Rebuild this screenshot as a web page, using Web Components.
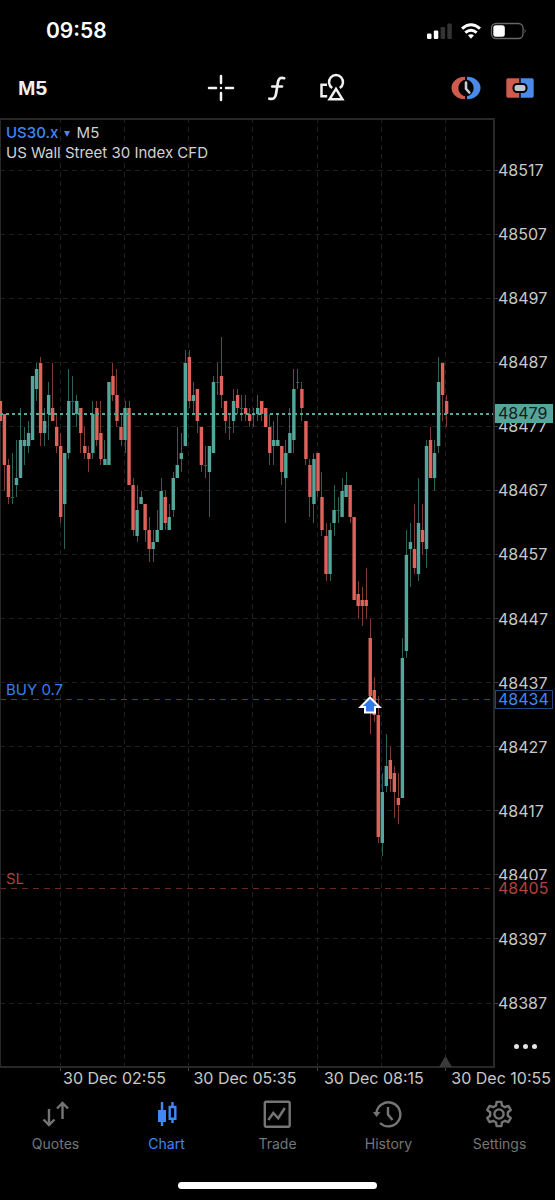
<!DOCTYPE html>
<html lang="en">
<head>
<meta charset="utf-8">
<meta name="viewport" content="width=device-width, initial-scale=1">
<title>US30.x M5 chart</title>
<style>
body { margin: 0; background: #000; color: #d2d2d2; font-family: Inter, "Liberation Sans", sans-serif; }
</style>
</head>
<body>
<trade-app></trade-app>
<script>
const define = (name, html, setup) => {
  const template = document.createElement('template');
  template.innerHTML = html;
  customElements.define(name, class extends HTMLElement {
    connectedCallback() {
      if (this.shadowRoot) return;
      this.attachShadow({ mode: 'open' }).append(template.content.cloneNode(true));
      if (setup) setup(this, this.shadowRoot);
    }
  });
};

define('status-bar', `
<style>
  :host { display: flex; justify-content: space-between; align-items: center; height: 62px; padding: 0 28px 0 46px; color: #fff; }
  time { font-size: 21px; line-height: 24px; font-weight: 600; }
  svg { display: block; }
</style>
<time>09:58</time>
<svg width="100" height="20" viewBox="427 20 100 20" role="img" aria-label="Signal, Wi-Fi, battery">
  <g fill="#fff"><rect x="427" y="32.500" width="4.500" height="5.500" rx="1.200"/><rect x="433.800" y="29.500" width="4.500" height="8.500" rx="1.200"/></g>
  <g fill="#333"><rect x="440.600" y="26" width="4.500" height="12" rx="1.200"/><rect x="447.300" y="22.500" width="4.500" height="15.500" rx="1.200"/></g>
  <g fill="none" stroke="#fff" stroke-width="3"><path d="M462 27.600Q471 19.800 480 27.600"/><path d="M465.300 31.700Q471 26.800 476.700 31.700"/></g>
  <path d="M468 34.300Q471 32 474 34.300L471 37.700Z" fill="#fff"/>
  <rect x="491.500" y="22.500" width="31.500" height="15" rx="4.500" fill="none" stroke="#666" stroke-width="1.300"/>
  <rect x="493.300" y="24.300" width="11.500" height="11.500" rx="2.500" fill="#fff"/>
  <path d="M524.600 27.600q2 2.400 0 4.800z" fill="#666"/>
</svg>`);

define('chart-toolbar', `
<style>
  :host { display: grid; grid-template-columns: 1fr auto 1fr; align-items: center; height: 56px; box-sizing: border-box; padding: 0 20px 4px 18px; }
  div { display: flex; gap: 24px; }
  .end { justify-content: flex-end; }
  button { appearance: none; border: 0; padding: 0; background: none; color: #f0f0f0; cursor: pointer; }
  .period { font: bold 21px/28px "Liberation Sans", sans-serif; }
  svg { display: block; }
</style>
<div><button class="period">M5</button></div>
<div>
  <button aria-label="Crosshair"><svg width="32" height="32" viewBox="-16 -16 32 32" stroke="#f4f4f4" stroke-width="2.500" stroke-linecap="round"><path d="M-12 0H-5M5 0H12M0-12V-5M0 5V12M0 0h.01"/></svg></button>
  <button aria-label="Indicators"><svg width="32" height="32" viewBox="-16 -16 32 32" fill="none" stroke="#f0f0f0" stroke-width="2.700" stroke-linecap="round"><path d="M7.200-9.800C3-11.200 1.500-9 .8-5L-1 6C-1.700 10.500-4 11.500-7.700 10.700M-4.800-1.500H5"/></svg></button>
  <button aria-label="Objects"><svg width="32" height="32" viewBox="-15 -16 32 32" fill="none" stroke="#f0f0f0" stroke-width="2.500"><path d="M.2 0A7 7 0 1 1 7.800 0"/><path d="M4 .8L10.400 11.200H-2.400Z"/><path d="M-5-3.200H-10.500V8.200H-4.800"/></svg></button>
</div>
<div class="end">
  <button aria-label="Trading sessions"><svg width="30" height="28" viewBox="-15 -14 30 28">
    <path d="M-1-11.200A13.500 11.200 0 0 0-1 11.200V8.300A8.500 8.500 0 0 1-1-8.300Z" fill="#cf5b4e"/>
    <path d="M1-11.200A13.500 11.200 0 0 1 1 11.200V8.300A8.500 8.500 0 0 0 1-8.300Z" fill="#4b8ae8"/>
    <path d="M0-5.500V.8L3.300 4.500" fill="none" stroke="#c9cdd4" stroke-width="2.600" stroke-linecap="round"/></svg></button>
  <button aria-label="One-click trading"><svg width="30" height="28" viewBox="-15 -14 30 28">
    <path d="M-.7-9.700V9.700H-12A1.700 1.700 0 0 1-13.700 8V-8A1.700 1.700 0 0 1-12-9.700Z" fill="#cf5b4e"/>
    <path d="M.7-9.700V9.700H12A1.700 1.700 0 0 0 13.700 8V-8A1.700 1.700 0 0 0 12-9.700Z" fill="#4b8ae8"/>
    <rect x="-6.500" y="-4" width="13" height="8" rx="3.500" fill="#c0c6d0" stroke="#000" stroke-width="2"/></svg></button>
</div>`);

/* Candles: direction (G up, R down), high, body top, body bottom, low; prices are offsets from 48000. */
const CANDLES = `R481,481,478,478 R479,479,471,467 R472,471,466,465 G473,466,466,465 G475,469,468,466 G480,475,469,469 G477,475,474,471 G478,476,474,473
G485,485,475,475 G487,486,483,481 R488,487,476,474 G480,478,476,474 G484,482,479,475 R487,480,478,478 R479,477,474,473 R476,474,463,462
G473,473,465,458 G486,481,473,472 G485,481,481,479 G482,481,479,477 R480,480,476,473 R477,474,473,472 R474,473,472,470 G481,479,473,472
R481,480,475,474 R481,476,472,471 G475,472,471,471 G484,484,471,471 R487,485,482,481 R486,482,478,477 R479,477,475,474 G481,480,475,473
R481,480,468,468 R469,468,461,460 G468,464,460,459 G467,466,465,465 R465,465,461,459 R463,461,458,456 G461,459,458,456 G464,461,459,459
G469,467,461,461 R467,466,462,461 G465,463,461,461 G470,469,464,463 G477,471,469,469 G476,473,472,470 G489,487,474,474 R489,488,481,480
G484,482,481,479 R483,483,478,476 R477,477,471,470 G474,471,471,469 G474,474,470,463 G485,484,473,473 G487,484,484,482 R491,485,482,480
R481,481,478,476 G479,477,477,475 G483,481,478,476 R483,482,480,479 G482,480,480,478 R482,480,479,478 R480,479,478,477 G480,479,479,477
G482,480,479,478 R481,481,479,478 R480,480,477,477 R479,477,473,471 G478,475,474,471 G479,475,474,474 R474,474,470,468 G475,473,469,462
G480,476,473,473 G486,483,475,473 G486,484,484,483 R484,483,480,478 R478,478,472,471 R472,471,466,463 G473,472,465,462 R473,473,467,466
R470,466,461,460 R462,460,454,453 G462,461,454,453 G468,464,462,460 G466,464,464,462 G469,467,463,463 G470,468,466,466 R468,468,463,462
R463,463,450,450 R453,451,449,447 R452,450,449,446 R455,450,449,447 R447,444,435,429 R438,436,432,431 R435,432,413,412 G423,420,412,410
G429,424,421,420 R427,425,422,420 R424,423,420,416 R423,419,418,415 G444,441,419,419 G461,457,442,441 G462,459,458,452 R465,458,455,454
G469,462,454,453 R465,461,459,457 G475,474,458,455 R477,475,469,469 G475,473,469,467 G488,484,474,473 R487,487,482,478 R482,481,479,477`.split(/\s+/);

define('candle-plot', `
<style>
  :host { display: block; position: relative; min-width: 0; }
  svg { display: block; width: 100%; height: 100%; overflow: visible; }
  text { font-size: 15px; }
  header { position: absolute; left: 6px; top: 5px; font-size: 15px; line-height: 20px; }
  button { appearance: none; border: 0; padding: 0; background: none; color: #3f86f7; font: 500 15px/20px Inter, sans-serif; cursor: pointer; }
  i { display: inline-block; margin: 0 2px 1px; border: solid transparent; border-width: 6px 3px 0; border-top-color: #3f86f7; }
  h1 { margin: 0; font: inherit; }
</style>
<svg viewBox="0 0 495 950" preserveAspectRatio="none">
  <g id="grid" stroke="#1f1f23" stroke-width="1" stroke-dasharray="5 4"></g>
  <g id="ticks" stroke="#444"></g>
  <path d="M0 581.500H491" stroke="#23488a" stroke-dasharray="6 5"/>
  <path d="M0 770.500H491" stroke="#6b2926" stroke-dasharray="6 5"/>
  <path d="M0 1H494V949H0Z" fill="none" stroke="#282828" stroke-width="2"/>
  <path d="M439 949L445.500 938L452 949Z" fill="#3a3a3a"/>
  <g id="candles"></g>
  <path d="M0 296H493" stroke="#58a89b" stroke-width="2" stroke-dasharray="3 3"/>
  <path d="M370 579.500L379.500 589H375V594.500H365V589H360.500Z" fill="#3579ee" stroke="#fff" stroke-width="2"/>
  <text x="6" y="577" fill="#3b7de8">BUY 0.7</text>
  <text x="6" y="766" fill="#a8423b">SL</text>
</svg>
<header><button>US30.x <i></i></button> M5<h1>US Wall Street 30 Index CFD</h1></header>`, (host, root) => {
  let grid = '', ticks = '', bars = '';
  for (let k = 0; k < 14; k++) {
    const y = Math.round(52 + k * 64.04) + .5;
    grid += `<path d="M0 ${y}H493"/>`;
    ticks += `<path d="M495 ${y}h3"/>`;
  }
  for (let k = 0; k < 7; k++) {
    const x = Math.floor(60 + k * 64.3) + .5;
    grid += `<path d="M${x} 0V948"/>`;
    if (k % 2 === 0) ticks += `<path d="M${x} 950v3"/>`;
  }
  const yOf = p => Math.round(245 + (487 - p) * 6.404);
  CANDLES.forEach((c, i) => {
    const [hi, top, bottom, lo] = c.slice(1).split(',').map(v => yOf(+v));
    const center = i * 4.02 + .4, x = Math.floor(center), up = c[0] === 'G';
    const left = (center - 1.7).toFixed(2);
    bars += `<rect x="${x}" y="${hi}" width="1" height="${Math.max(1, lo - hi)}" fill="${up ? '#2c6059' : '#803a35'}"/>`
      + (top === bottom
        ? `<rect x="${left}" y="${top}" width="3.4" height="1" fill="#2c6059"/>`
        : `<rect x="${left}" y="${top}" width="3.4" height="${bottom - top}" fill="${up ? '#55a69a' : '#e0635b'}"/>`);
  });
  root.getElementById('grid').innerHTML = grid;
  root.getElementById('ticks').innerHTML = ticks;
  root.getElementById('candles').innerHTML = bars;
});

define('price-axis', `
<style>
  :host { display: flex; flex-direction: column; position: relative; padding: 20px 0 11px; font-size: 16px; line-height: 18px; color: #c8c8c8; }
  ol { margin: 0; padding: 0 0 0 3px; list-style: none; display: grid; grid-template-rows: repeat(14, 1fr); align-items: center; height: 897px; }
  button { appearance: none; border: 0; padding: 0; background: none; height: 22px; display: flex; justify-content: center; align-items: center; gap: 4px; cursor: pointer; }
  button i { width: 5px; height: 5px; border-radius: 50%; background: #e4e4e4; }
  b { position: absolute; left: 0; right: 2px; padding-left: 3px; font-weight: 400; box-sizing: border-box; }
  .now { top: 286px; background: #55a69a; color: #10201e; line-height: 19px; }
  .buy { top: 572px; border: 1px solid #1f4583; padding-left: 2px; background: #000; color: #3f86f7; line-height: 17px; }
  .stop { top: 762px; background: #000; color: #b0443d; line-height: 17px; }
</style>
<ol></ol>
<button aria-label="More"><i></i><i></i><i></i></button>
<b class="now">48479</b><b class="buy">48434</b><b class="stop">48405</b>`, (host, root) => {
  let rows = '';
  for (let p = 48517; p >= 48387; p -= 10) rows += `<li>${p}</li>`;
  root.querySelector('ol').innerHTML = rows;
});

define('time-axis', `
<style>
  :host { display: flex; justify-content: space-between; padding: 0 4px 0 63px; font-size: 16px; line-height: 20px; color: #c8c8c8; white-space: nowrap; }
</style>
<time>30 Dec 02:55</time><time>30 Dec 05:35</time><time>30 Dec 08:15</time><time>30 Dec 10:55</time>`);

define('tab-item', `
<style>
  :host { display: block; color: #757575; }
  :host([active]) { color: #3f86f7; }
  a { display: flex; flex-direction: column; align-items: center; gap: 4px; color: inherit; text-decoration: none; font-size: 14px; line-height: 20px; }
  ::slotted(svg) { display: block; width: 32px; height: 32px; fill: none; stroke: currentColor; stroke-width: 2.400px; }
</style>
<a href="#"><slot name="icon"></slot><slot></slot></a>`);

define('tab-bar', `
<style>
  :host { display: grid; grid-template-columns: repeat(5, 1fr); padding-top: 10px; }
</style>
<tab-item><svg slot="icon" viewBox="-16 -16 32 32"><path d="M-7-5V10.500M-12.500 5.500L-7 11L-1.500 5.500M6.500 5V-10.500M1-5.500L6.500-11L12-5.500"/></svg>Quotes</tab-item>
<tab-item active><svg slot="icon" viewBox="-16 -16 32 32"><path d="M-5-12V12M5.500-12V-7M5.500 5V9"/><path d="M-9-4H-1V8H-9Z" fill="currentColor" stroke="none"/><path d="M2.700-7H8.300V4.700H2.700Z"/></svg>Chart</tab-item>
<tab-item><svg slot="icon" viewBox="-15 -16 32 32"><rect x="-12.200" y="-12.200" width="24.900" height="24.900" rx="1.500"/><path d="M-8.700 6L-3.700-1L1.200 4.200L7.800-6"/></svg>Trade</tab-item>
<tab-item><svg slot="icon" viewBox="-15 -16 32 32"><path d="M-11.600-1A12 12 0 1 1-8 9"/><path d="M-15-2H-7.500L-11.500 3Z" fill="currentColor" stroke="none"/><path d="M0-7V.5L4.500 6"/></svg>History</tab-item>
<tab-item><svg slot="icon" id="gear" viewBox="-15 -16 32 32"><circle r="4.600"/></svg>Settings</tab-item>`, (host, root) => {
  /* Six-tooth gear outline: each tooth is a narrow top on a wider foot. */
  const points = [];
  for (let t = 0; t < 6; t++) {
    for (const [offset, r] of [[-19, 9], [-11, 12.4], [11, 12.4], [19, 9]]) {
      const a = (t * 60 + offset) * Math.PI / 180;
      points.push(`${(r * Math.sin(a)).toFixed(2)} ${(-r * Math.cos(a)).toFixed(2)}`);
    }
  }
  root.getElementById('gear').insertAdjacentHTML('beforeend', `<path stroke-linejoin="round" d="M${points.join('L')}Z"/>`);
});

define('home-indicator', `
<style>
  :host { display: block; padding: 28px 0 11px; }
  div { width: 36%; height: 7px; margin: 0 auto; border-radius: 4px; background: #fff; }
</style>
<div></div>`);

define('trade-app', `
<style>
  :host { display: block; }
  main { display: grid; grid-template-columns: 1fr 60px; }
</style>
<status-bar></status-bar>
<chart-toolbar></chart-toolbar>
<main><candle-plot></candle-plot><price-axis></price-axis></main>
<time-axis></time-axis>
<nav><tab-bar></tab-bar></nav>
<home-indicator></home-indicator>`);
</script>
</body>
</html>
